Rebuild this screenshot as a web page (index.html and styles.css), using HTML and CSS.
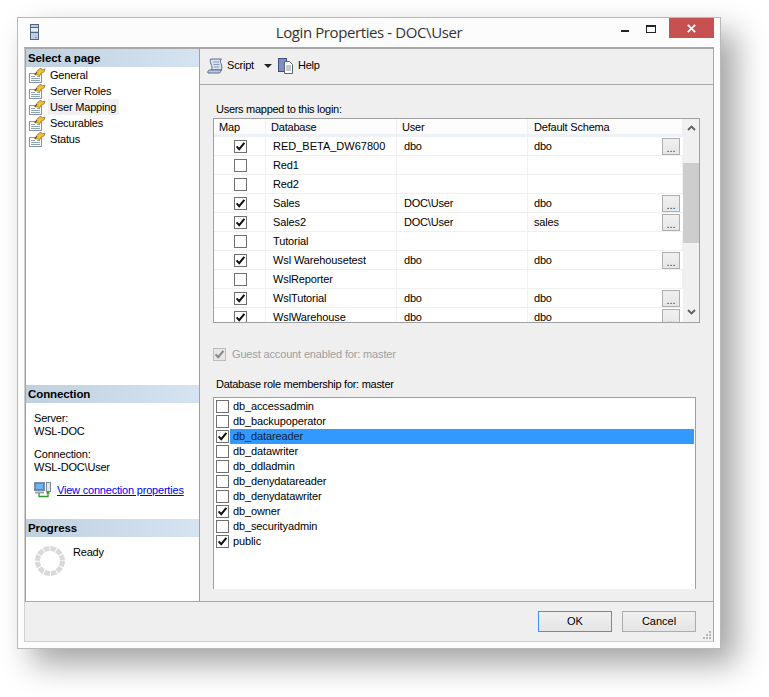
FILE: index.html
```html
<!DOCTYPE html>
<html lang="en">
<head>
<meta charset="utf-8">
<title>Login Properties - DOC\User</title>
<link rel="stylesheet" href="styles.css">
</head>
<body>
<svg class="defs" width="0" height="0" aria-hidden="true">
  <symbol id="chk" viewBox="0 0 13 13"><path d="M2.6 6.4 5.2 9.2 10.4 2.8" fill="none" stroke="#111" stroke-width="2"/></symbol>
  <symbol id="page" viewBox="0 0 17 16">
    <rect x="0.5" y="6.5" width="12" height="9" fill="#fff" stroke="#7f93ad"/>
    <path d="M2 9.5h4M2 11.5h9M2 13.5h9M8 9.5h3" stroke="#8fa3bb"/>
    <path d="M5.5 7.5 9 3l3-2 1 2 3-1-1 3-2.5 1-1.500 2.500-2.500-.5z" fill="#f2c033" stroke="#8d7420" stroke-width=".7"/>
    <path d="M6 8 8 5" stroke="#444" stroke-width="1"/>
  </symbol>
</svg>
<div class="window">
  <header class="titlebar">
    <div class="title-left">
      <svg class="server-icon" width="9" height="16" viewBox="0 0 9 16"><rect x=".5" y=".5" width="8" height="15" fill="#b9cfe6" stroke="#53647c"/><rect x="1" y="4" width="7" height="3" fill="#e6eef7"/><path d="M1 8.500h7" stroke="#53647c"/><path d="M1 3.500h7" stroke="#53647c"/><rect x="5" y="13" width="2" height="1" fill="#5fc05f"/></svg>
    </div>
    <h1 class="title">Login Properties - DOC\User</h1>
    <div class="controls">
      <span class="ctl"><i class="min"></i></span>
      <span class="ctl"><i class="max"></i></span>
      <span class="close"><svg width="9" height="9" viewBox="0 0 9 9"><path d="M.8.800 8.200 8.200M8.200.8.800 8.200" stroke="#fff" stroke-width="1.700"/></svg></span>
    </div>
  </header>
  <div class="client">
    <div class="main">
      <aside class="side">
        <div class="section-head">Select a page</div>
        <nav class="nav">
          <div class="nav-item"><svg class="page-icon"><use href="#page"/></svg><span class="nav-text">General</span></div>
          <div class="nav-item"><svg class="page-icon"><use href="#page"/></svg><span class="nav-text">Server Roles</span></div>
          <div class="nav-item"><svg class="page-icon"><use href="#page"/></svg><span class="nav-text active">User Mapping</span></div>
          <div class="nav-item"><svg class="page-icon"><use href="#page"/></svg><span class="nav-text">Securables</span></div>
          <div class="nav-item"><svg class="page-icon"><use href="#page"/></svg><span class="nav-text">Status</span></div>
        </nav>
        <div class="section-head">Connection</div>
        <div class="conn">
          <div>Server:<br>WSL-DOC</div>
          <div>Connection:<br>WSL-DOC\User</div>
          <div class="conn-link">
            <svg width="17" height="16" viewBox="0 0 17 16"><rect x=".5" y=".5" width="10" height="8" fill="#3f8fe8" stroke="#7d8ea3"/><rect x="2" y="2" width="7" height="5" fill="#6db4f5"/><rect x="12.500" y=".5" width="4" height="9" fill="#dfe6ee" stroke="#7d8ea3"/><path d="M1 10.500h9" stroke="#9aa7b5" stroke-width="2"/><path d="M5 11v3.500h9V11" fill="none" stroke="#2f9a2f" stroke-width="1.300"/><path d="M14 9l-2.200 2.500h4.400z" fill="#2f9a2f"/></svg>
            <a class="link" href="#">View connection properties</a>
          </div>
        </div>
        <div class="section-head">Progress</div>
        <div class="progress">
          <svg class="spinner" width="30" height="30" viewBox="0 0 30 30"><circle cx="15" cy="15" r="12.500" fill="none" stroke="#d9d9d9" stroke-width="5" stroke-dasharray="5.540 1"/></svg>
          <span>Ready</span>
        </div>
      </aside>
      <section class="pane">
        <div class="toolbar">
          <svg class="tb-icon" width="16" height="16" viewBox="0 0 16 16"><path d="M3.500 1h11c-1.500 1-1.500 3-.5 4.500 1 2 1 4.500.5 6.500H4.500c.8-2 .5-4-.5-6-.7-1.700-1-3.500-.5-5z" fill="#d7e2ee" stroke="#5a6e88"/><path d="M6 4h6M6.500 6.500h6M7 9h5" stroke="#8ba0b8"/><path d="M4.500 12H14.500c-.5 1-1 2-2 3H1c-.5-1 0-2.500 1-3z" fill="#b9cbdf" stroke="#5a6e88"/></svg>
          <span class="tb-label">Script</span>
          <span class="tb-arrow"></span>
          <svg class="tb-icon" width="16" height="16" viewBox="0 0 16 16"><rect x=".5" y=".5" width="8" height="13" fill="#7f8fc4" stroke="#41507f"/><path d="M6.500 3.500h5l3 3v9h-8z" fill="#fff" stroke="#5c6470"/><path d="M8 8h5M8 10h5M8 12h5" stroke="#8a93a0"/></svg>
          <span class="tb-label">Help</span>
        </div>
        <div class="pane-body">
          <div class="label">Users mapped to this login:</div>
          <div class="table">
            <div class="table-grid">
              <div class="row head"><div>Map</div><div>Database</div><div>User</div><div class="h-sch">Default Schema</div></div>
              <div class="row"><div class="c-map"><span class="cb"><svg><use href="#chk"/></svg></span></div><div class="c-db caps">RED_BETA_DW67800</div><div class="c-user">dbo</div><div class="c-sch">dbo<button class="dots">...</button></div></div>
              <div class="row"><div class="c-map"><span class="cb"></span></div><div class="c-db">Red1</div><div></div><div></div></div>
              <div class="row"><div class="c-map"><span class="cb"></span></div><div class="c-db">Red2</div><div></div><div></div></div>
              <div class="row"><div class="c-map"><span class="cb"><svg><use href="#chk"/></svg></span></div><div class="c-db">Sales</div><div class="c-user">DOC\User</div><div class="c-sch">dbo<button class="dots">...</button></div></div>
              <div class="row"><div class="c-map"><span class="cb"><svg><use href="#chk"/></svg></span></div><div class="c-db">Sales2</div><div class="c-user">DOC\User</div><div class="c-sch">sales<button class="dots">...</button></div></div>
              <div class="row"><div class="c-map"><span class="cb"></span></div><div class="c-db">Tutorial</div><div></div><div></div></div>
              <div class="row"><div class="c-map"><span class="cb"><svg><use href="#chk"/></svg></span></div><div class="c-db">Wsl Warehousetest</div><div class="c-user">dbo</div><div class="c-sch">dbo<button class="dots">...</button></div></div>
              <div class="row"><div class="c-map"><span class="cb"></span></div><div class="c-db">WslReporter</div><div></div><div></div></div>
              <div class="row"><div class="c-map"><span class="cb"><svg><use href="#chk"/></svg></span></div><div class="c-db">WslTutorial</div><div class="c-user">dbo</div><div class="c-sch">dbo<button class="dots">...</button></div></div>
              <div class="row"><div class="c-map"><span class="cb"><svg><use href="#chk"/></svg></span></div><div class="c-db">WslWarehouse</div><div class="c-user">dbo</div><div class="c-sch">dbo<button class="dots">...</button></div></div>
            </div>
            <div class="scrollbar">
              <svg class="sb-arrow" width="9" height="6" viewBox="0 0 9 6"><path d="M1 5 4.500 1.500 8 5" fill="none" stroke="#606060" stroke-width="1.800"/></svg>
              <div class="sb-thumb"></div>
              <svg class="sb-arrow down" width="9" height="6" viewBox="0 0 9 6"><path d="M1 1 4.500 4.500 8 1" fill="none" stroke="#606060" stroke-width="1.800"/></svg>
            </div>
          </div>
          <div class="guest">
            <span class="cb disabled"><svg><use href="#chk"/></svg></span>
            <span>Guest account enabled for: master</span>
          </div>
          <div class="label role-label">Database role membership for: master</div>
          <div class="roles">
            <div class="role"><span class="cb"></span><span class="role-text">db_accessadmin</span></div>
            <div class="role"><span class="cb"></span><span class="role-text">db_backupoperator</span></div>
            <div class="role"><span class="cb"><svg><use href="#chk"/></svg></span><span class="role-text selected">db_datareader</span></div>
            <div class="role"><span class="cb"></span><span class="role-text">db_datawriter</span></div>
            <div class="role"><span class="cb"></span><span class="role-text">db_ddladmin</span></div>
            <div class="role"><span class="cb"></span><span class="role-text">db_denydatareader</span></div>
            <div class="role"><span class="cb"></span><span class="role-text">db_denydatawriter</span></div>
            <div class="role"><span class="cb"><svg><use href="#chk"/></svg></span><span class="role-text">db_owner</span></div>
            <div class="role"><span class="cb"></span><span class="role-text">db_securityadmin</span></div>
            <div class="role"><span class="cb"><svg><use href="#chk"/></svg></span><span class="role-text">public</span></div>
          </div>
        </div>
      </section>
    </div>
    <footer class="footer">
      <button class="btn primary">OK</button>
      <button class="btn">Cancel</button>
      <svg class="grip" width="9" height="9" viewBox="0 0 9 9"><path d="M6 0h2v2H6zM3 3h2v2H3zM6 3h2v2H6zM0 6h2v2H0zM3 6h2v2H3zM6 6h2v2H6z" fill="#b8b8b8"/></svg>
    </footer>
  </div>
</div>
</body>
</html>
```

FILE: styles.css
```css
* { box-sizing: border-box; }
html, body { margin: 0; padding: 0; }
body {
  width: 769px;
  height: 697px;
  overflow: hidden;
  background: #fff;
  font: 11px/13px "Liberation Sans", Arial, sans-serif;
  letter-spacing: -.2px;
  color: #000;
}
.defs { display: block; height: 0; }
.window {
  margin: 17px 0 0 17px;
  width: 704px;
  height: 632px;
  background: #fcfcfc;
  border: 1px solid #b9b9b9;
  padding: 0 6px 6px;
  display: flex;
  flex-direction: column;
  box-shadow: 15px 15px 30px rgba(0, 0, 0, .36);
}
.titlebar {
  flex: none;
  height: 29px;
  display: grid;
  grid-template-columns: 1fr auto 1fr;
  align-items: start;
}
.title-left { padding: 6px 0 0 6px; }
.server-icon { display: block; }
.title {
  margin: 4px 0 0;
  font: 400 15px/20px "Open Sans", "Noto Sans", sans-serif;
  letter-spacing: -.4px;
  color: #333;
}
.controls { display: flex; justify-content: flex-end; }
.ctl { width: 26px; height: 20px; position: relative; display: flex; justify-content: center; }
.min { display: block; width: 8px; height: 2px; background: #222; margin-top: 12px; }
.max { display: block; width: 10px; height: 8px; border: 1px solid #222; border-top-width: 2px; margin-top: 7px; }
.close {
  width: 45px;
  height: 20px;
  margin-left: 5px;
  background: #c75050;
  display: flex;
  align-items: center;
  justify-content: center;
}
.client {
  flex: 1;
  min-height: 0;
  display: flex;
  flex-direction: column;
  background: #efefef;
  border: 1px solid #cfcfcf;
  border-top: 2px solid #a8a8a8;
  border-right-color: #a8a8a8;
  border-right-width: 1px;
}
.main {
  flex: 1;
  min-height: 0;
  display: flex;
  border-bottom: 1px solid #a8a8a8;
}
.side {
  flex: none;
  width: 175px;
  background: #fff;
  border-left: 1px solid #a0a0a0;
  border-right: 1px solid #a0a0a0;
  display: flex;
  flex-direction: column;
}
.section-head {
  flex: none;
  height: 18px;
  padding-left: 2px;
  font: 700 11.500px/19px "Liberation Sans", Arial, sans-serif;
  letter-spacing: -.1px;
  background: linear-gradient(90deg, #bfd0df, #d6e4f2);
}
.nav { flex: 1; padding-top: 0; }
.nav-item { height: 16px; display: flex; align-items: center; padding-left: 3px; }
.page-icon { width: 17px; height: 16px; flex: none; }
.nav-text { margin-left: 2px; padding: 0 2px; height: 16px; line-height: 16px; }
.active { background: #f0f0f0; padding-right: 3px; }
.conn {
  flex: none;
  height: 116px;
  padding: 9px 0 0 8px;
  display: flex;
  flex-direction: column;
  gap: 10px;
}
.conn-link { display: flex; align-items: center; gap: 6px; margin-top: -2px; }
.link { color: #0000ee; }
.progress {
  flex: none;
  height: 64px;
  padding: 9px 0 0 9px;
  display: flex;
  align-items: flex-start;
  gap: 8px;
}
.pane { flex: 1; min-width: 0; display: flex; flex-direction: column; }
.toolbar {
  flex: none;
  height: 36px;
  border-bottom: 1px solid #a8a8a8;
  display: flex;
  align-items: center;
  padding: 0 0 2px 7px;
}
.tb-icon { flex: none; }
.tb-label { margin-left: 4px; }
.tb-arrow {
  width: 0;
  height: 0;
  margin: 0 6px 0 10px;
  border: 4px solid transparent;
  border-top: 4px solid #222;
  border-bottom: 0;
}
.pane-body { flex: 1; min-height: 0; padding: 18px 0 0 13px; display: flex; flex-direction: column; }
.label { height: 15px; line-height: 13px; padding-left: 3px; letter-spacing: -.28px; }
.table {
  flex: none;
  width: 487px;
  height: 205px;
  background: #fff;
  border: 1px solid #a0a0a0;
  display: flex;
  overflow: hidden;
}
.table-grid { width: 469px; flex: none; overflow: hidden; }
.row {
  display: grid;
  grid-template-columns: 52px 131px 131px 155px;
  height: 19px;
  border-bottom: 1px solid #f0f0f0;
}
.row > div {
  border-right: 1px solid #f0f0f0;
  padding-left: 6px;
  line-height: 18px;
  display: flex;
  align-items: center;
}
.row > .c-map { padding-left: 20px; }
.row > .c-db { padding-left: 7px; letter-spacing: -.12px; }
.row > .caps { letter-spacing: 0; }
.row > .c-user { padding-left: 7px; }
.row > .c-sch { padding-left: 6px; justify-content: space-between; padding-right: 3px; border-right: 0; }
.row.head {
  height: 18px;
  background: linear-gradient(#fdfdfd, #fbfbfb);
  border-bottom: 3px solid #eef2f7;
}
.row.head > div { padding-left: 5px; align-items: flex-start; line-height: 17px; }
.row.head > .h-sch { padding-left: 6px; }
.cb {
  display: block;
  flex: none;
  width: 13px;
  height: 13px;
  background: #fff;
  border: 1px solid #707070;
  position: relative;
}
.cb svg { display: block; width: 13px; height: 13px; margin: -1px; }
.dots {
  width: 18px;
  height: 17px;
  padding: 4px 0 0;
  margin: 0;
  font: 11px/11px "Liberation Sans", Arial, sans-serif;
  color: #333;
  background: linear-gradient(#f0f0f0, #e6e6e6);
  border: 1px solid #adadad;
}
.scrollbar {
  flex: 1;
  background: #f0f0f0;
  display: flex;
  flex-direction: column;
  align-items: center;
  padding-top: 6px;
}
.sb-arrow { display: block; flex: none; }
.sb-thumb { align-self: stretch; margin: 32px 0 0 0; height: 80px; background: #cdcdcd; flex: none; }
.sb-arrow.down { margin-top: 66px; }
.guest { display: flex; align-items: center; gap: 6px; margin-top: 24px; height: 15px; color: #a0a0a0; letter-spacing: -.15px; }
.cb.disabled { background: #e6e6e6; border-color: #bcbcbc; }
.cb.disabled use { opacity: .45; }
.role-label { margin-top: 16px; }
.roles {
  flex: 1;
  min-height: 0;
  width: 483px;
  margin-top: 4px;
  background: #fff;
  border: 1px solid #a0a0a0;
  border-bottom: 0;
  margin-bottom: 12px;
  padding: 1px 1px 0 2px;
  overflow: hidden;
}
.role { display: flex; align-items: flex-start; height: 15px; }
.role .cb { margin-top: 1px; }
.role-text { flex: 1; padding-left: 3px; height: 15px; line-height: 15px; margin-left: 1px; letter-spacing: -.12px; }
.selected { background: #3399ff; color: #0d2740; }
.footer {
  flex: none;
  height: 39px;
  display: flex;
  justify-content: flex-end;
  gap: 10px;
  padding: 9px 17px 0 0;
  position: relative;
}
.btn {
  width: 74px;
  height: 21px;
  padding: 0;
  font: 11px/19px "Liberation Sans", Arial, sans-serif;
  color: #000;
  background: linear-gradient(#f0f0f0, #e5e5e5);
  border: 1px solid #acacac;
}
.btn.primary { border-color: #3399ff; }
.grip { position: absolute; right: 1px; bottom: 1px; }
```
